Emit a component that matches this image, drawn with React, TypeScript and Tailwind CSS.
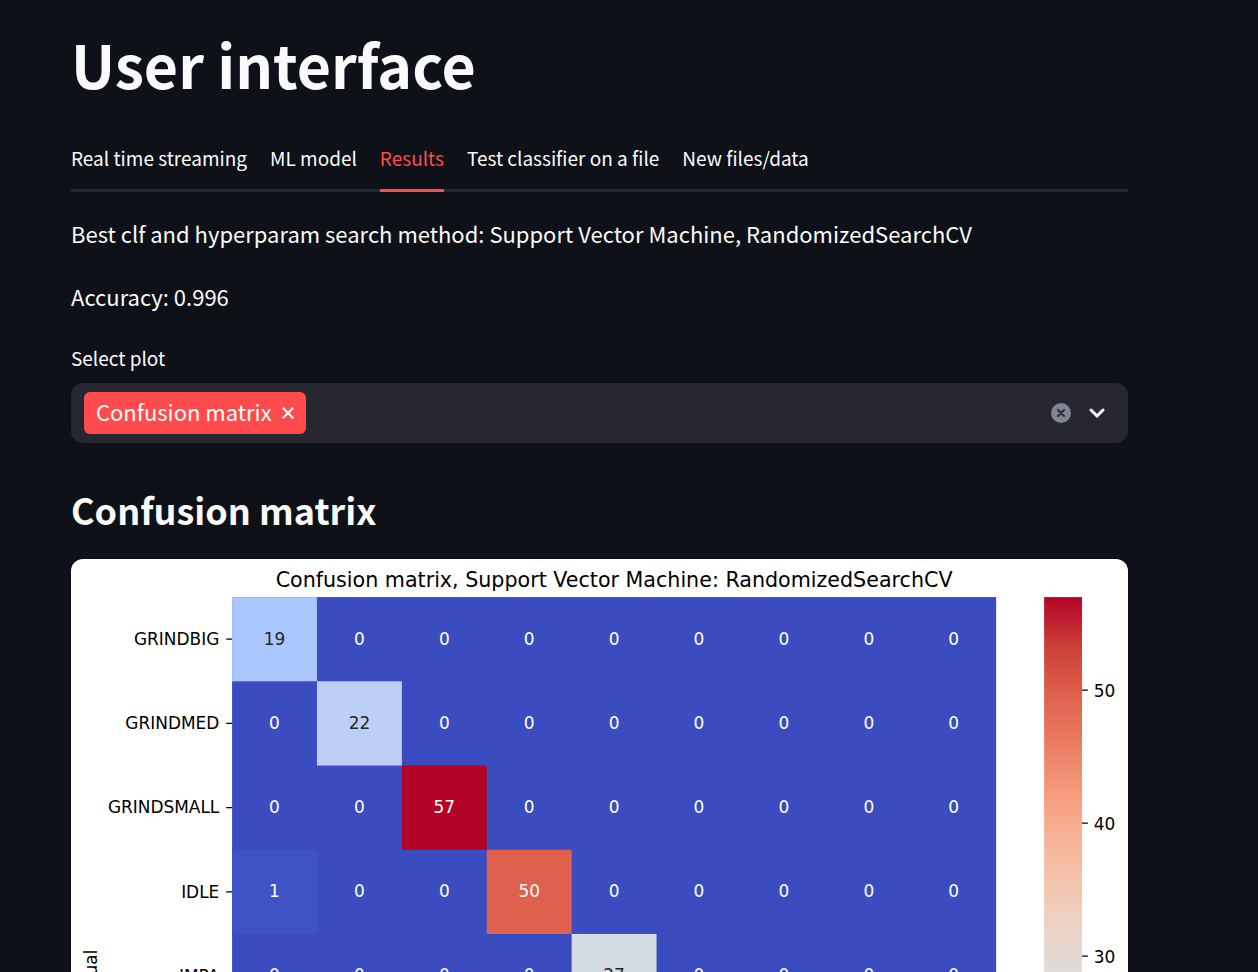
import { useState } from "react";

const TABS = [
  "Real time streaming",
  "ML model",
  "Results",
  "Test classifier on a file",
  "New files/data",
];

type Row = { label: string; values: number[] };

const ROWS: Row[] = [
  { label: "GRINDBIG", values: [19, 0, 0, 0, 0, 0, 0, 0, 0] },
  { label: "GRINDMED", values: [0, 22, 0, 0, 0, 0, 0, 0, 0] },
  { label: "GRINDSMALL", values: [0, 0, 57, 0, 0, 0, 0, 0, 0] },
  { label: "IDLE", values: [1, 0, 0, 50, 0, 0, 0, 0, 0] },
  { label: "IMPA", values: [0, 0, 0, 0, 27, 0, 0, 0, 0] },
];

const CELL_COLORS: Record<number, string> = {
  0: "#3b4cc0",
  1: "#3f53c6",
  19: "#aac7fd",
  22: "#bcd0f7",
  27: "#d5dbe3",
  50: "#de604d",
  57: "#b40426",
};

const DARK_TEXT = [19, 22, 27];

// Evenly spaced stops of the cool-warm scale, from the highest value to the lowest.
const SCALE = [
  "#b40426",
  "#cb3e38",
  "#dd5f4b",
  "#e97a5f",
  "#f4987a",
  "#f7b194",
  "#f4c4ac",
  "#ebd3c6",
  "#dddcdc",
  "#ccd9ed",
  "#b8d0f9",
  "#a3c2ff",
  "#8db0fe",
  "#779af7",
  "#6282ea",
  "#4e68d8",
  "#3b4cc0",
];

// All chart measures are in tenths of a point.
const LEFT = 960;
const TOP = 227;
const CELL_W = 506;
const CELL_H = 502;
const BAR_X = 5800;
const BAR_W = 226;
const BAR_H = 4518;
const UNIT = BAR_H / 57;

function ConfusionMatrixChart() {
  return (
    <svg
      viewBox="0 0 6300 2700"
      className="block w-full bg-white font-['DejaVu_Sans',sans-serif]"
      role="img"
      aria-label="Confusion matrix heat map"
    >
      <defs>
        <linearGradient
          id="scale"
          gradientUnits="userSpaceOnUse"
          x1="0"
          x2="0"
          y1={TOP}
          y2={TOP + BAR_H}
        >
          {SCALE.map((color, i) => (
            <stop key={color} offset={i / (SCALE.length - 1)} stopColor={color} />
          ))}
        </linearGradient>
      </defs>
      <text x={LEFT + 4.5 * CELL_W} y="166" fontSize="123" textAnchor="middle" fill="#000">
        Confusion matrix, Support Vector Machine: RandomizedSearchCV
      </text>
      <rect x={LEFT} y={TOP} width={9 * CELL_W} height={9 * CELL_H} fill="#3b4cc0" />
      {ROWS.map((row, r) => {
        const mid = TOP + (r + 0.5) * CELL_H;
        return (
          <g key={row.label}>
            <path d={`M${LEFT - 35} ${mid}H${LEFT}`} stroke="#000" strokeWidth="8" />
            <text x={LEFT - 76} y={mid + 34} fontSize="101" textAnchor="end" fill="#000">
              {row.label}
            </text>
            {row.values.map((value, c) => (
              <g key={c}>
                {value > 0 && (
                  <rect
                    x={LEFT + c * CELL_W}
                    y={TOP + r * CELL_H}
                    width={CELL_W}
                    height={CELL_H}
                    fill={CELL_COLORS[value]}
                  />
                )}
                <text
                  x={LEFT + (c + 0.5) * CELL_W}
                  y={mid + 32}
                  fontSize="101"
                  textAnchor="middle"
                  fill={DARK_TEXT.includes(value) ? "#262626" : "#fff"}
                >
                  {value}
                </text>
              </g>
            ))}
          </g>
        );
      })}
      <text
        transform={`translate(152 ${TOP + 4.5 * CELL_H}) rotate(-90)`}
        fontSize="101"
        textAnchor="middle"
        fill="#000"
      >
        Actual
      </text>
      <rect x={BAR_X} y={TOP} width={BAR_W} height={BAR_H} fill="url(#scale)" />
      {[50, 40, 30].map((tick) => {
        const y = TOP + (57 - tick) * UNIT;
        return (
          <g key={tick}>
            <path d={`M${BAR_X + BAR_W} ${y}h35`} stroke="#000" strokeWidth="8" />
            <text x={BAR_X + BAR_W + 70} y={y + 40} fontSize="101" fill="#000">
              {tick}
            </text>
          </g>
        );
      })}
    </svg>
  );
}

function PlotSelect() {
  return (
    <div>
      <label htmlFor="plot" className="mt-7 block text-[19px] leading-[30px]">
        Select plot
      </label>
      <div className="mt-[10px] flex h-[60px] items-center rounded-xl bg-[#262730] pr-5 pl-[13px]">
        <span className="flex h-[42px] items-center rounded-md bg-[#ff4b4b] px-3 text-[22px] leading-8 text-white">
          <span className="pb-1">Confusion matrix</span>
          <button type="button" aria-label="Remove Confusion matrix" className="ml-[10px]">
            <svg width="12" height="12" viewBox="0 0 12 12" fill="none" stroke="currentColor" strokeWidth="2.2">
              <path d="M0.8 0.8l10.4 10.4M11.2 0.8l-10.4 10.4" />
            </svg>
          </button>
        </span>
        <input id="plot" type="text" className="min-w-0 flex-1 bg-transparent px-2 text-[22px] outline-none" />
        <button type="button" aria-label="Clear all" className="mr-[15px]">
          <svg width="20" height="20" viewBox="0 0 20 20">
            <circle cx="10" cy="10" r="10" fill="#808495" />
            <path d="M7 7l6 6M13 7l-6 6" stroke="#262730" strokeWidth="2" strokeLinecap="round" />
          </svg>
        </button>
        <button type="button" aria-label="Open list">
          <svg width="22" height="20" viewBox="0 0 22 20" fill="none" stroke="#fafafa" strokeWidth="3" strokeLinecap="round">
            <path d="M5 7l6 6 6-6" />
          </svg>
        </button>
      </div>
    </div>
  );
}

export default function App() {
  const [active, setActive] = useState("Results");
  return (
    <main className="h-screen overflow-y-auto bg-[#0e1117] pt-6 pr-[130px] pl-[71px] font-['Noto_Sans_CJK_SC',sans-serif] text-[#fafafa] [scrollbar-width:none]">
      <h1 className="text-[59px] leading-[80px] font-bold">User interface</h1>
      <div role="tablist" className="mt-6 flex gap-[23px] border-b-3 border-[#262730]">
        {TABS.map((tab) => (
          <button
            key={tab}
            type="button"
            role="tab"
            aria-selected={tab === active}
            onClick={() => setActive(tab)}
            className={
              tab === active
                ? "-mb-[3px] h-16 border-b-3 border-[#ff4b4b] text-[19px] whitespace-nowrap text-[#ff4b4b]"
                : "-mb-[3px] h-16 border-b-3 border-transparent text-[19px] whitespace-nowrap"
            }
          >
            {tab}
          </button>
        ))}
      </div>
      <section>
        <p className="mt-[22px] text-[22px] leading-[38px]">
          Best clf and hyperparam search method: Support Vector Machine, RandomizedSearchCV
        </p>
        <p className="mt-[25px] text-[22px] leading-[38px]">Accuracy: 0.996</p>
        <PlotSelect />
        <h2 className="mt-10 text-[36px] leading-[52px] font-bold">Confusion matrix</h2>
        <div className="mt-6 overflow-hidden rounded-xl">
          <ConfusionMatrixChart />
        </div>
      </section>
    </main>
  );
}
